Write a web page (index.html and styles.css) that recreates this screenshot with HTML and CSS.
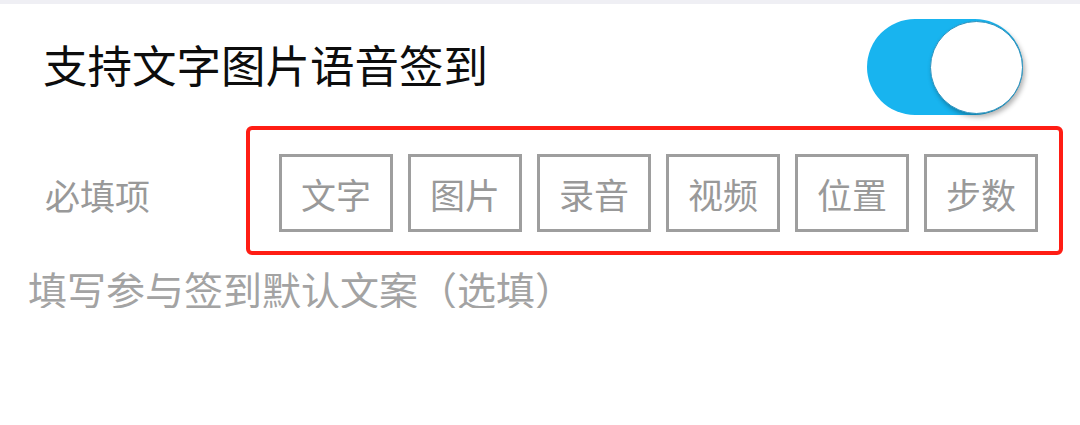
FILE: index.html
```html
<!DOCTYPE html>
<html>
    <head>
        <meta charset="utf-8">
        <title>签到设置</title>
        <link rel="stylesheet" href="styles.css">
    </head>
    <body>
        <div class="topbar"></div>
        <div class="switch-row">
            <span class="title">支持文字图片语音签到</span>
            <div class="toggle on">
                <div class="knob"></div>
            </div>
        </div>
        <div class="required-row">
            <span class="label">必填项</span>
            <div class="tag-box">
                <div class="tag">文字</div>
                <div class="tag">图片</div>
                <div class="tag">录音</div>
                <div class="tag">视频</div>
                <div class="tag">位置</div>
                <div class="tag">步数</div>
            </div>
        </div>
        <div class="hint">填写参与签到默认文案（选填）</div>
    </body>
</html>
```

FILE: styles.css
```css
body{
    margin: 0;
    background: #fff;
    font-family: "Noto Sans CJK SC", "Noto Sans", sans-serif;
}
.topbar{
    height: 4px;
    background-color: #efeff4;
}
.switch-row{
    display: flex;
    align-items: center;
    justify-content: space-between;
    padding: 15px 57px 0 43px;
}
.title{
    font-size: 44.5px;
    line-height: 1;
    color: #0d0d0d;
    margin-bottom: 6px;
}
.toggle{
    width: 156px;
    height: 96px;
    border-radius: 48px;
    background-color: #18b4ef;
    display: flex;
    align-items: center;
    justify-content: flex-end;
}
.knob{
    width: 93px;
    height: 93px;
    border-radius: 50%;
    background-color: #fff;
    box-sizing: border-box;
    border: 1.5px solid #2c93bf;
    box-shadow: 2px 3px 5px rgba(0, 0, 0, 0.3);
}
.required-row{
    display: flex;
    align-items: center;
    margin-top: 11px;
    padding-left: 45px;
}
.label{
    width: 201px;
    font-size: 35px;
    line-height: 1;
    color: #999;
    margin-top: 8px;
}
.tag-box{
    display: flex;
    gap: 15px;
    width: 817px;
    box-sizing: border-box;
    border: 4px solid #ff1d14;
    border-radius: 6px;
    padding: 24px 0 19px 29px;
}
.tag{
    width: 114px;
    height: 78px;
    box-sizing: border-box;
    border: 3px solid #9e9e9e;
    display: flex;
    align-items: center;
    justify-content: center;
    font-size: 35px;
    color: #999;
}
.hint{
    margin-top: 14px;
    padding-left: 28px;
    font-size: 39px;
    line-height: 1;
    color: #a3a3a3;
}
```
